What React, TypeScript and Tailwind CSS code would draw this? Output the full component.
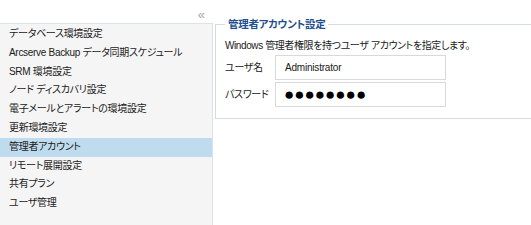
const items = [
  "データベース環境設定",
  "Arcserve Backup データ同期スケジュール",
  "SRM 環境設定",
  "ノード ディスカバリ設定",
  "電子メールとアラートの環境設定",
  "更新環境設定",
  "管理者アカウント",
  "リモート展開設定",
  "共有プラン",
  "ユーザ管理",
];

const font = { fontFamily: '"Liberation Sans", "Noto Sans CJK JP", sans-serif' };

function SideMenu() {
  return (
    <div className="flex w-[213px] shrink-0 flex-col">
      <div className="flex h-[23px] items-center justify-end pr-[8px] pt-[6px]">
        <span className="text-[13px] leading-none text-[#a0a6ad]">«</span>
      </div>
      <div className="flex-1 border-t border-r border-[#dde2e8] bg-[#f5f5f5] pt-[1px]">
        {items.map((item) => (
          <div
            key={item}
            className={
              item === "管理者アカウント"
                ? "h-[18.8px] whitespace-nowrap bg-[#bfdcef] pl-[9px] text-[10px] leading-[18.8px] tracking-[-0.3px] text-[#1a1a1a]"
                : "h-[18.8px] whitespace-nowrap pl-[9px] text-[10px] leading-[18.8px] tracking-[-0.3px] text-[#1a1a1a]"
            }
          >
            {item}
          </div>
        ))}
      </div>
    </div>
  );
}

function AccountSettings() {
  return (
    <div className="flex-1 pl-[2px] pt-[17px]">
      <fieldset className="w-[340px] border border-[#d6dae2] pb-[11px] pl-[9px]">
        <legend className="px-[3px] text-[10.5px] font-bold leading-[14px] tracking-[-0.3px] text-[#1f4f8f]">
          管理者アカウント設定
        </legend>
        <div className="whitespace-nowrap pt-[9px] text-[10px] leading-[12px] tracking-[-0.4px] text-[#1a1a1a]">
          Windows 管理者権限を持つユーザ アカウントを指定します。
        </div>
        <div className="mt-[3px] flex items-center">
          <span className="w-[50px] whitespace-nowrap text-[10px] tracking-[-0.3px] text-[#1a1a1a]">ユーザ名</span>
          <div className="flex h-[25px] w-[171px] items-center border border-[#d9d9d9] bg-white pl-[9px] text-[10px] tracking-[-0.2px] text-[#1a1a1a]">
            Administrator
          </div>
        </div>
        <div className="mt-[2px] flex items-center">
          <span className="w-[50px] whitespace-nowrap text-[10px] tracking-[-0.3px] text-[#1a1a1a]">パスワード</span>
          <div className="flex h-[25px] w-[171px] items-center border border-[#d9d9d9] bg-white pl-[8px] text-[17px] leading-none text-black">
            ●●●●●●●●
          </div>
        </div>
      </fieldset>
    </div>
  );
}

export default function App() {
  return (
    <div
      className="flex h-[225px] w-[531px] overflow-hidden bg-white [font-feature-settings:'palt']"
      style={font}
    >
      <SideMenu />
      <AccountSettings />
    </div>
  );
}
